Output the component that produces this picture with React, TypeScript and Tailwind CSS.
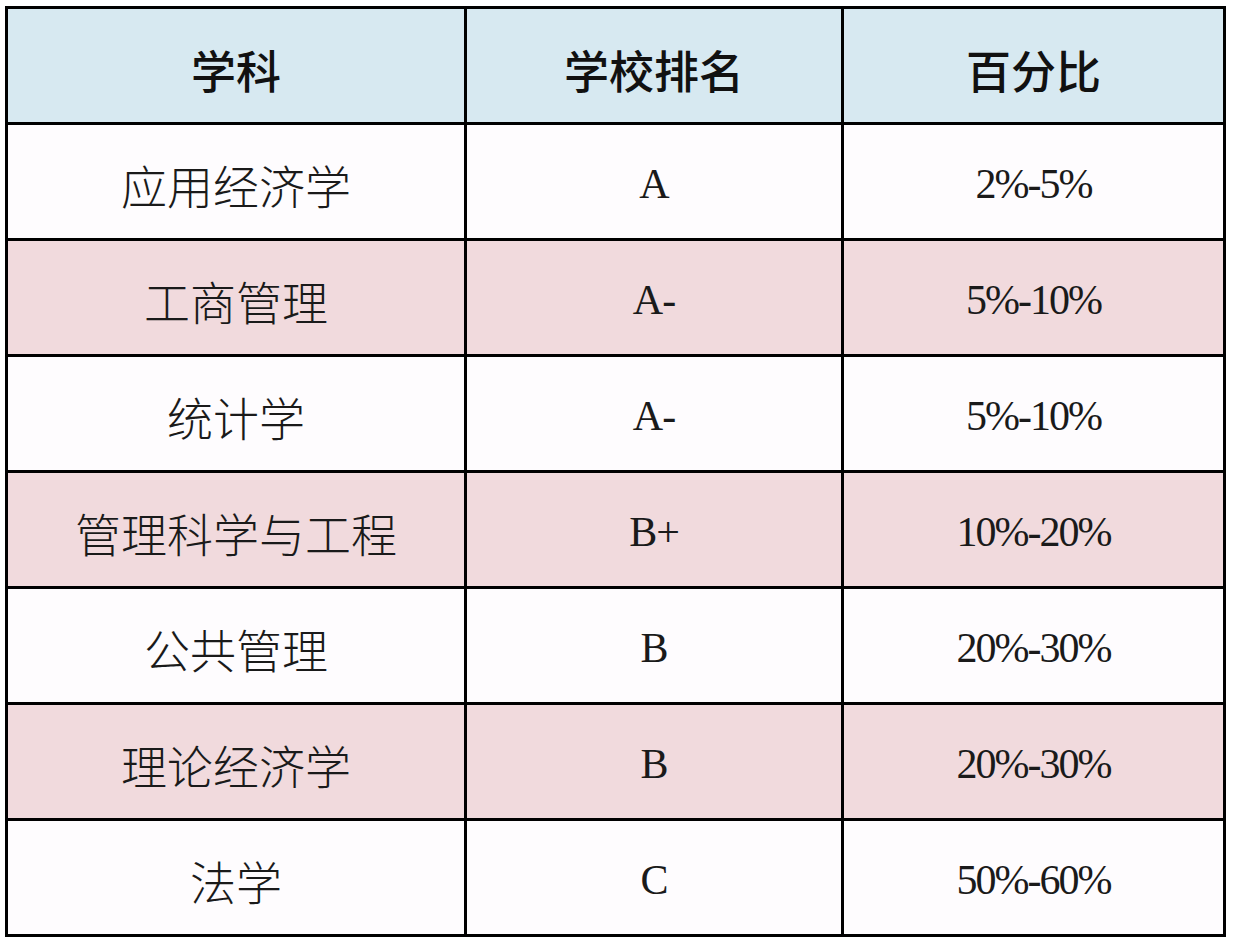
const rows = [
  { subject: '应用经济学', rank: 'A', pct: '2%-5%' },
  { subject: '工商管理', rank: 'A-', pct: '5%-10%' },
  { subject: '统计学', rank: 'A-', pct: '5%-10%' },
  { subject: '管理科学与工程', rank: 'B+', pct: '10%-20%' },
  { subject: '公共管理', rank: 'B', pct: '20%-30%' },
  { subject: '理论经济学', rank: 'B', pct: '20%-30%' },
  { subject: '法学', rank: 'C', pct: '50%-60%' },
];

const latin = "font-['Liberation_Serif','Noto_Sans_CJK_SC',serif]";

export default function App() {
  return (
    <div className="w-[1234px] h-[942px] bg-white pl-[5px] pt-[6px]">
      <div className="grid w-[1221px] grid-cols-[456px_374px_379px] auto-rows-[113px] gap-[3px] bg-black p-[3px]">
        {['学科', '学校排名', '百分比'].map((h) => (
          <div
            key={h}
            className="flex items-center justify-center bg-[#d7e9f1] pt-[8px] font-['Noto_Sans_CJK_SC',sans-serif] text-[45px] font-medium text-[#111]"
          >
            {h}
          </div>
        ))}
        {rows.map((r, i) => {
          const bg = i % 2 === 1 ? 'bg-[#f1dadd]' : 'bg-[#fefcfe]';
          return [
            <div
              key={`s${i}`}
              className={`${bg} flex items-center justify-center pt-[6px] font-['Noto_Sans_CJK_SC',sans-serif] text-[46px] font-light text-[#1a1a1a]`}
            >
              {r.subject}
            </div>,
            <div
              key={`r${i}`}
              className={`${bg} flex items-center justify-center pt-[6px] ${latin} text-[42px] tracking-[-1px] text-[#1a1a1a]`}
            >
              {r.rank}
            </div>,
            <div
              key={`p${i}`}
              className={`${bg} flex items-center justify-center pt-[6px] ${latin} text-[42px] tracking-[-2px] text-[#1a1a1a]`}
            >
              {r.pct}
            </div>,
          ];
        })}
      </div>
    </div>
  );
}
